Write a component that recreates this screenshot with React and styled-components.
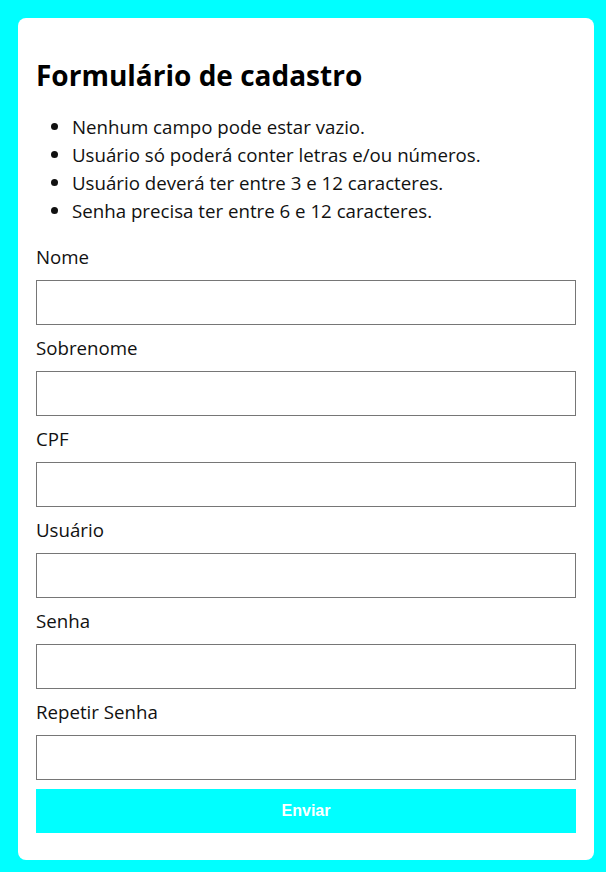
import React from "react";
import styled, { createGlobalStyle } from "styled-components";

const Global = createGlobalStyle`
  html, body { margin: 0; padding: 0; background: #00ffff; }
  body { font-family: "Open Sans", sans-serif; color: #111; }
  * { box-sizing: border-box; }
`;

const Page = styled.div`
  padding: 18px;
  min-height: 872px;
`;

const Card = styled.form`
  background: #fff;
  border-radius: 8px;
  padding: 39px 18px 27px;
  display: flex;
  flex-direction: column;
  width: 576px;
  height: 842px;
`;

const Title = styled.h1`
  margin: 0;
  font-size: 28px;
  line-height: 36px;
  font-weight: 700;
  color: #000;
`;

const Rules = styled.ul`
  margin: 20px 0 18px;
  padding-left: 36px;
  font-size: 18.7px;
  line-height: 28px;
  li::marker { font-size: 20px; }
`;

const Field = styled.div`
  display: flex;
  flex-direction: column;
  gap: 9px;
  margin-bottom: 9px;
`;

const Label = styled.label`
  font-size: 18.7px;
  line-height: 28px;
`;

const Input = styled.input`
  height: 45px;
  width: 100%;
  border: 1px solid #767676;
  border-radius: 0;
  padding: 0 8px;
  font-size: 16px;
  background: #fff;
`;

const Button = styled.button`
  height: 44px;
  width: 100%;
  border: none;
  background: #00ffff;
  color: #fff;
  font-family: "Liberation Sans", Arial, sans-serif;
  font-weight: 700;
  font-size: 16px;
  cursor: pointer;
`;

const fields = ["Nome", "Sobrenome", "CPF", "Usuário", "Senha", "Repetir Senha"];

export default function App() {
  return (
    <Page>
      <Global />
      <Card onSubmit={(e) => e.preventDefault()}>
        <Title>Formulário de cadastro</Title>
        <Rules>
          <li>Nenhum campo pode estar vazio.</li>
          <li>Usuário só poderá conter letras e/ou números.</li>
          <li>Usuário deverá ter entre 3 e 12 caracteres.</li>
          <li>Senha precisa ter entre 6 e 12 caracteres.</li>
        </Rules>
        {fields.map((f) => (
          <Field key={f}>
            <Label>{f}</Label>
            <Input type={f.includes("Senha") ? "password" : "text"} />
          </Field>
        ))}
        <Button type="submit">Enviar</Button>
      </Card>
    </Page>
  );
}
